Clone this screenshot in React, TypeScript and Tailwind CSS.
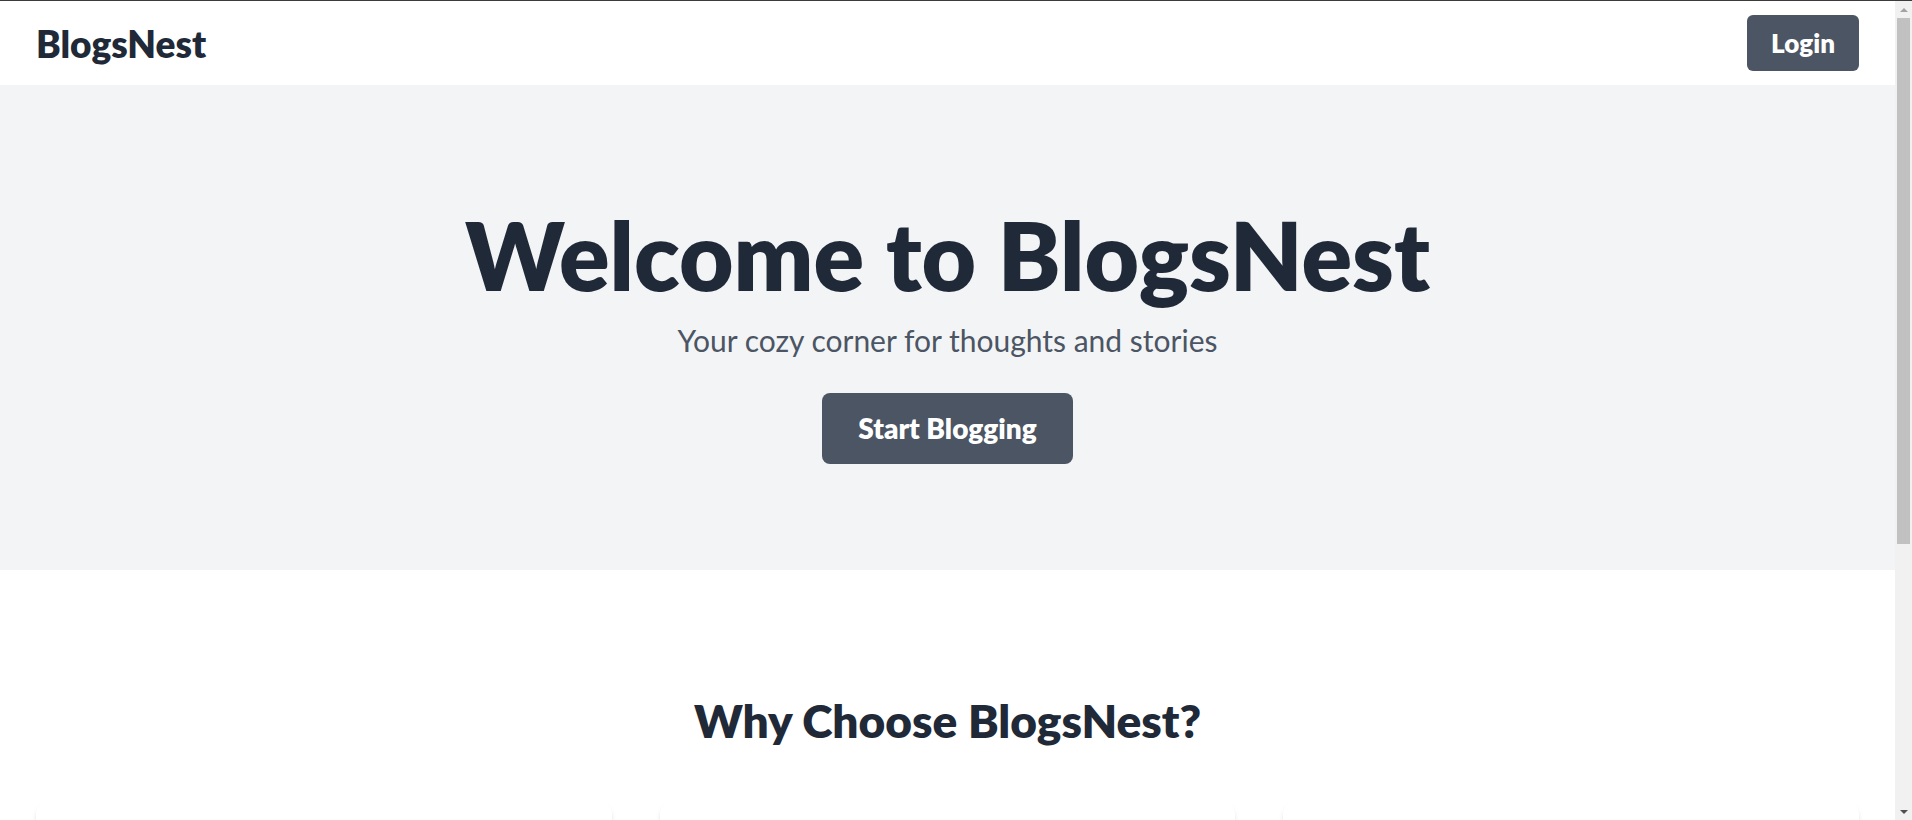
import React from "react";

export default function App() {
  return (
    <div className="flex min-h-screen border-t border-[#3b3b3b] bg-white text-[#1f2937] [font-family:Lato,sans-serif]">
      <div className="min-w-0 flex-1">
        <header className="flex h-[84px] items-center justify-between px-9">
          <span className="text-[37px] font-extrabold leading-none">BlogsNest</span>
          <button className="rounded-md bg-[#4b5563] px-[24px] py-2.5 text-[26px] font-extrabold leading-[36px] text-white">
            Login
          </button>
        </header>

        <section className="flex h-[485px] flex-col items-center bg-[#f3f4f6] pt-[123px]">
          <h1 className="text-[94px] font-extrabold leading-none">Welcome to BlogsNest</h1>
          <p className="mt-4 text-[30px] leading-[45px] text-[#4b5563]">
            Your cozy corner for thoughts and stories
          </p>
          <button className="mt-[30px] rounded-lg bg-[#4b5563] px-9 py-4 text-[28px] font-extrabold leading-[39px] text-white">
            Start Blogging
          </button>
        </section>

        <section className="px-9 pb-24 pt-[128px]">
          <h2 className="text-center text-[46px] font-extrabold leading-none">Why Choose BlogsNest?</h2>
          <div className="mt-[58px] grid grid-cols-3 gap-12">
            <div className="h-[300px] rounded-xl bg-white shadow-md" />
            <div className="h-[300px] rounded-xl bg-white shadow-md" />
            <div className="h-[300px] rounded-xl bg-white shadow-md" />
          </div>
        </section>
      </div>

      <div className="flex h-[819px] w-[17px] flex-col bg-[#f1f1f1]">
        <div className="flex h-[17px] items-center justify-center">
          <div className="h-0 w-0 border-x-[4px] border-b-[4px] border-x-transparent border-b-[#a3a3a3]" />
        </div>
        <div className="mx-[2px] h-[526px] bg-[#c1c1c1]" />
        <div className="flex-1" />
        <div className="flex h-[17px] items-center justify-center">
          <div className="h-0 w-0 border-x-[4px] border-t-[4px] border-x-transparent border-t-[#505050]" />
        </div>
      </div>
    </div>
  );
}
